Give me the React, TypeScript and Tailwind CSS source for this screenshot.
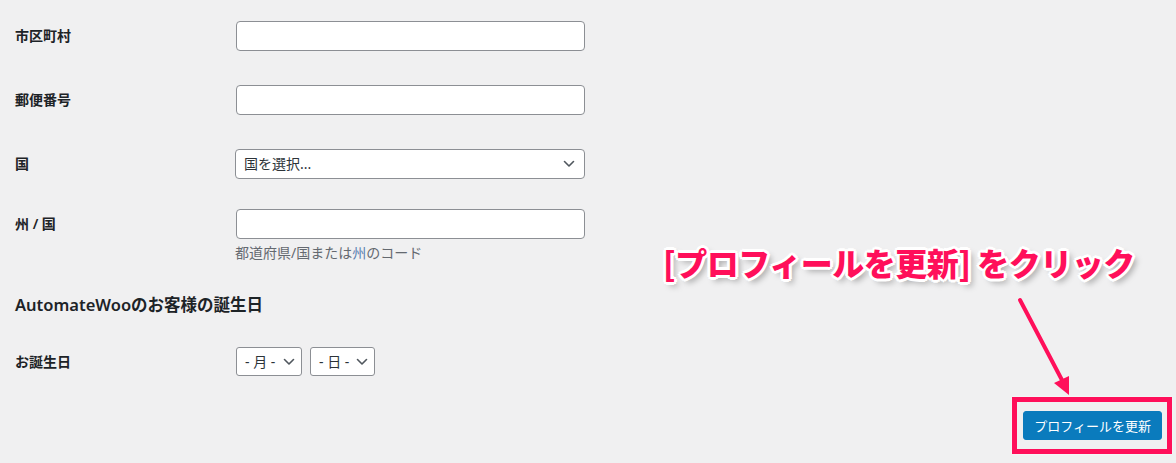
import React from "react";

const Chevron = ({ className = "" }: { className?: string }) => (
  <svg className={className} width="12" height="8" viewBox="0 0 12 8" fill="none">
    <path d="M1.5 1.5 L6 6 L10.5 1.5" stroke="#50575e" strokeWidth="1.6" strokeLinecap="round" strokeLinejoin="round" />
  </svg>
);

const Label = ({ children }: { children: React.ReactNode }) => (
  <div className="w-[221px] shrink-0 text-[14px] font-semibold text-[#1d2327] leading-[20px]">{children}</div>
);

const TextInput = () => (
  <input type="text" className="w-[349px] h-[30px] bg-white border border-[#8c8f94] rounded-[4px] outline-none" />
);

export default function App() {
  return (
    <div className="relative w-[1176px] h-[463px] overflow-hidden bg-[#f0f0f1] font-['Noto_Sans','Noto_Sans_CJK_JP',sans-serif]">
      <div className="flex flex-col pl-[15px] pt-[21px]">
        <div className="flex items-center">
          <Label>市区町村</Label>
          <TextInput />
        </div>
        <div className="flex items-center mt-[34px]">
          <Label>郵便番号</Label>
          <TextInput />
        </div>
        <div className="flex items-center mt-[34px]">
          <div className="w-[220px] shrink-0 text-[14px] font-semibold text-[#1d2327] leading-[20px]">国</div>
          <div className="w-[350px] h-[30px] bg-white border border-[#8c8f94] rounded-[4px] flex items-center justify-between pl-[8px] pr-[9px]">
            <span className="text-[14px] text-[#2c3338] leading-[20px]">国を選択...</span>
            <Chevron />
          </div>
        </div>
        <div className="flex items-center mt-[30px]">
          <Label>州 / 国</Label>
          <TextInput />
        </div>
        <div className="ml-[220px] mt-[4px] text-[14px] leading-[20px] text-[#646970]">
          都道府県/国または<span className="text-[#5a7fb0]">州</span>のコード
        </div>
        <h2 className="mt-[30px] text-[16.5px] font-semibold text-[#1d2327] leading-[24px]">AutomateWooのお客様の誕生日</h2>
        <div className="flex items-center mt-[30px]">
          <Label>お誕生日</Label>
          <div className="flex gap-[8px]">
            <div className="w-[66px] h-[29px] bg-white border border-[#8c8f94] rounded-[3px] flex items-center justify-between pl-[8px] pr-[6px]">
              <span className="text-[14px] text-[#2c3338] leading-[20px]">- 月 -</span>
              <Chevron />
            </div>
            <div className="w-[65px] h-[29px] bg-white border border-[#8c8f94] rounded-[3px] flex items-center justify-between pl-[8px] pr-[6px]">
              <span className="text-[14px] text-[#2c3338] leading-[20px]">- 日 -</span>
              <Chevron />
            </div>
          </div>
        </div>
        <div className="flex justify-end pr-[14px] mt-[35px]">
          <button className="h-[29px] px-[10px] bg-[#0a7bbd] border border-[#0a7bbd] rounded-[3px] text-white text-[13px] leading-[20px]">
            プロフィールを更新
          </button>
        </div>
      </div>

      {/* annotation overlay */}
      <div className="absolute left-[1012px] top-[397px] w-[160px] h-[57px] border-[5px] border-[#ff0f5a] shadow-[0_0_2px_rgba(255,255,255,0.9)]" />
      <svg className="absolute left-0 top-0 pointer-events-none" width="1176" height="463">
        <line x1="1020" y1="300" x2="1063" y2="382" stroke="#ff0f5a" strokeWidth="4" strokeLinecap="round" />
        <polygon points="1069,395 1054,383 1069,376" fill="#ff0f5a" />
      </svg>
      <div className="absolute left-[663px] top-[245px] whitespace-nowrap text-[32px] leading-[34px] tracking-[-0.5px] font-black text-[#ff0f5a] font-['Noto_Sans_CJK_JP',sans-serif] [text-shadow:2px_0_0_#fff,-2px_0_0_#fff,0_2px_0_#fff,0_-2px_0_#fff,2px_2px_0_#fff,-2px_-2px_0_#fff,2px_-2px_0_#fff,-2px_2px_0_#fff,3px_0_0_#fff,-3px_0_0_#fff,0_3px_0_#fff,0_-3px_0_#fff,4px_4px_6px_rgba(0,0,0,0.35)]">
        [プロフィールを更新] をクリック
      </div>
    </div>
  );
}
